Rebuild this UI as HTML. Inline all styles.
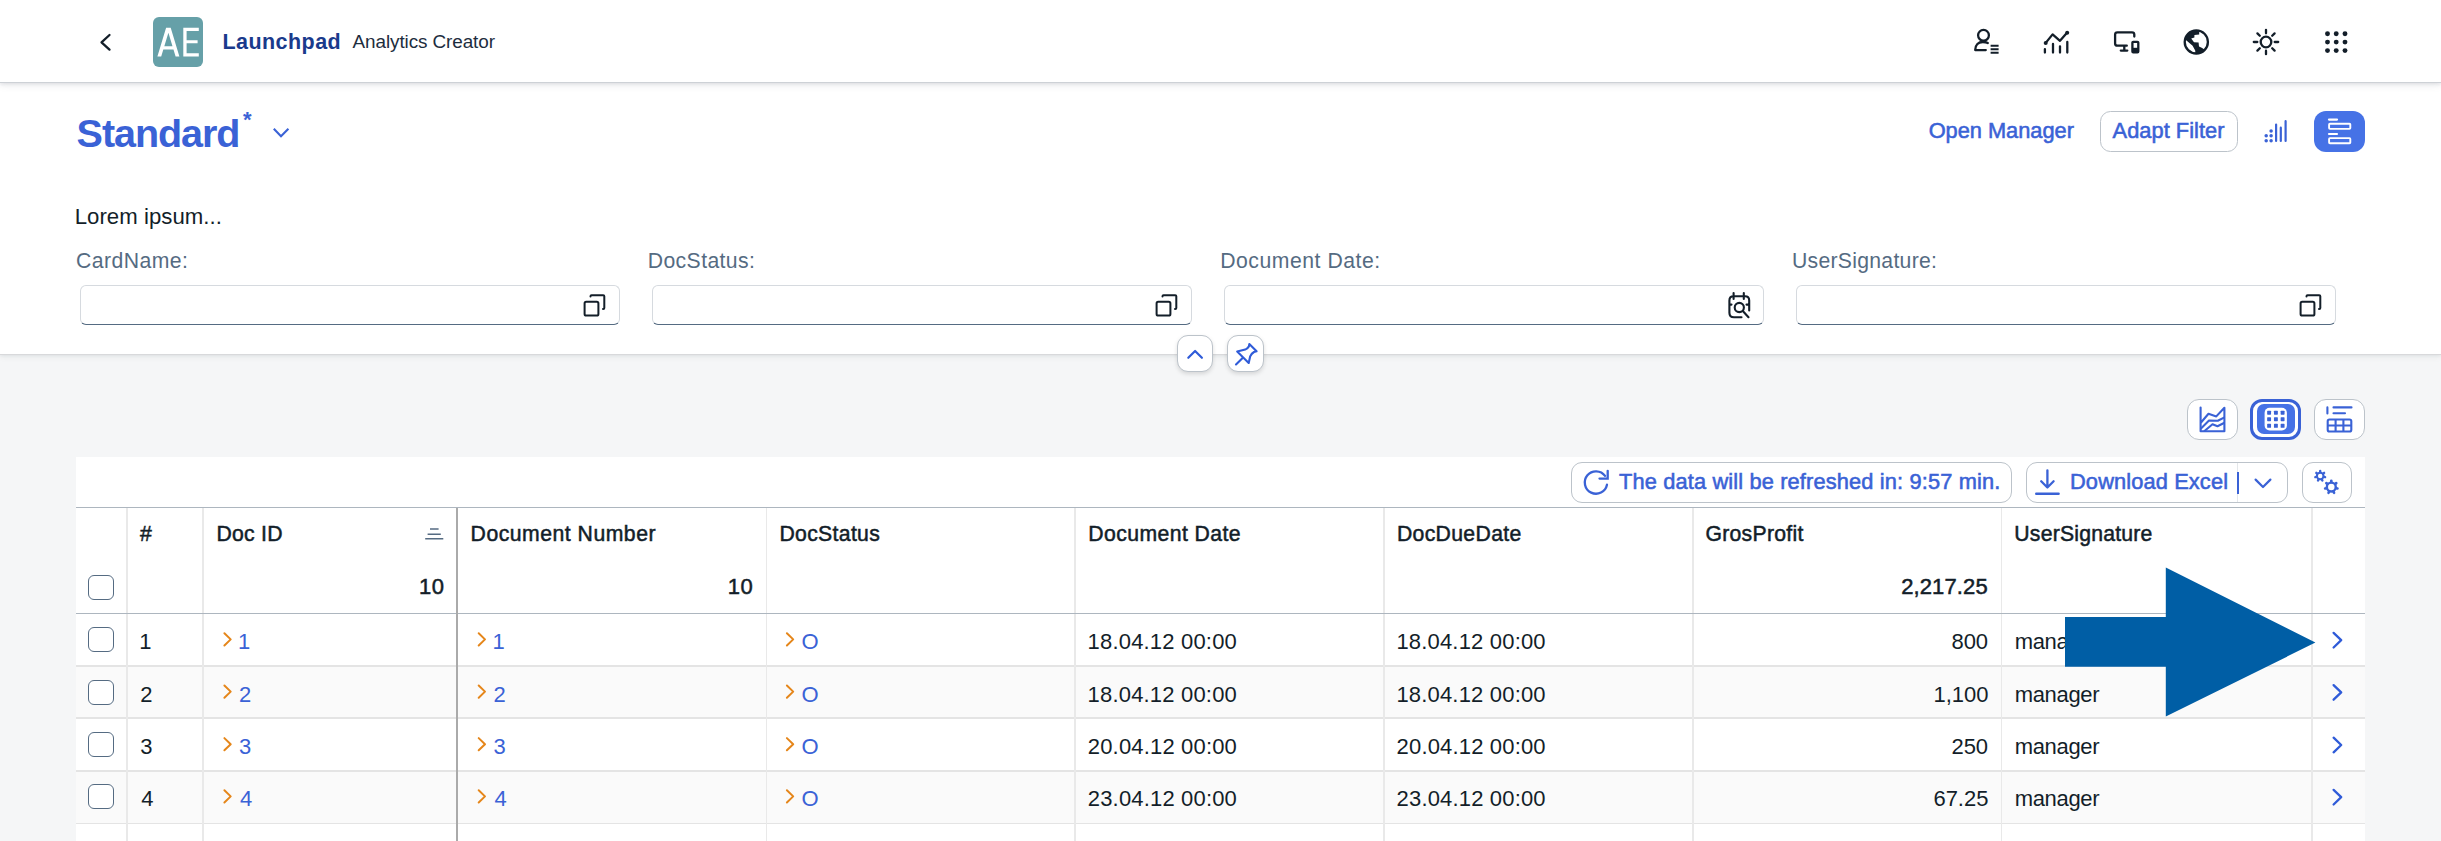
<!DOCTYPE html>
<html><head><meta charset="utf-8"><style>
*{box-sizing:border-box;margin:0;padding:0}
html,body{width:2441px;height:841px;overflow:hidden}
body{background:#f5f6f7;font-family:"Liberation Sans",sans-serif;color:#1d2d3e;position:relative}
.a{position:absolute}
.t{position:absolute;line-height:0;white-space:nowrap;z-index:8}
.b{font-weight:bold}
svg{position:absolute;overflow:visible;z-index:8;left:0;top:0}
#hdr{left:0;top:0;width:2441px;height:82px;background:#fff;box-shadow:0 1px 0 #cdd1d6,0 2px 4px rgba(30,40,60,.13),0 4px 8px rgba(30,40,60,.06);z-index:3}
#flt{left:0;top:82px;width:2441px;height:272px;background:#fff;box-shadow:0 1px 0 #d8d9db,0 2px 3px rgba(30,40,60,.07),0 4px 6px rgba(30,40,60,.04);z-index:2}
.inp{position:absolute;top:284.8px;height:40px;width:539.5px;background:#fff;border:1.5px solid #d6dadf;border-bottom:1.7px solid #556b82;border-radius:6px;z-index:4}
.btn{position:absolute;background:#fff;border:1.5px solid #bcc3ca;border-radius:11px;z-index:4}
#tbl{left:76px;top:457px;width:2289px;height:384px;background:#fff;z-index:1}
.cb{position:absolute;left:88px;width:25.6px;height:25px;border:1.6px solid #556b82;border-radius:6px;background:#fff;z-index:6}
</style></head><body>
<div id="hdr" class="a"></div>
<div id="flt" class="a"></div>
<div id="tbl" class="a"></div>
<div class="a" style="left:152.7px;top:16.7px;width:50.4px;height:50.3px;background:#66a0a8;border-radius:6px;z-index:5"></div>
<svg width="2441" height="841">
 <path d="M157.4 56.5 L166.1 27.7 L170.7 27.7 L179.4 56.5 L175.6 56.5 L168.4 32.8 L161.2 56.5 Z M162.3 46.3 H174.6 V49.4 H162.3 Z M183.3 27.7 H198.8 V30.9 H186.6 V40.2 H197.6 V43.2 H186.6 V53.3 H198.8 V56.5 H183.3 Z" fill="#fff"/>
 
 <path d="M109.5 35 L101.5 42.3 L109.5 49.6" fill="none" stroke="#131e29" stroke-width="2.3" stroke-linecap="round" stroke-linejoin="round"/>
 <g fill="none" stroke="#131e29" stroke-width="2.3" stroke-linecap="round" stroke-linejoin="round">
  <circle cx="1983.5" cy="35.3" r="5.4"/>
  <path d="M1985.8 50.1 H1975.2 C1975.2 45 1978.5 42 1982.8 42 C1985 42 1986.6 42.4 1987.8 43"/>
  <path d="M1990.6 45.8 H1998.6 M1990.6 49.3 H1998.6 M1990.6 52.8 H1998.6" stroke-width="2.1" stroke-linecap="butt"/>
  <path d="M2045.7 42.9 L2052.6 34.4 L2060 40.8 L2067 32.8"/>
  <path d="M2044.9 49.2 V52.6 M2053 44 V52.6 M2060 46.3 V52.6 M2067.3 42 V52.6"/>
  <path d="M2134.3 36.6 V34.6 Q2134.3 32.3 2132 32.3 H2117.4 Q2115.1 32.3 2115.1 34.6 V43.4 Q2115.1 45.7 2117.4 45.7 H2126.8 M2124.3 45.7 V50.6 M2120.8 50.6 H2127.3"/>
  <rect x="2132.4" y="41.8" width="5.9" height="10.6" rx="0.8"/>
  <circle cx="2196.3" cy="41.9" r="11.6"/>
  <circle cx="2266" cy="42" r="5.3"/>
  <path d="M2266 29.8 V33.3 M2266 50.7 V54.2 M2253.8 42 H2257.3 M2274.7 42 H2278.2 M2257.4 33.4 L2259.8 35.8 M2272.2 48.2 L2274.6 50.6 M2257.4 50.6 L2259.8 48.2 M2272.2 35.8 L2274.6 33.4"/>
 </g>
 <circle cx="2045.7" cy="42.9" r="2" fill="#131e29"/>
 <circle cx="2067.2" cy="32.7" r="2" fill="#131e29"/>
 <rect x="2132.4" y="47.8" width="5.9" height="4.6" fill="#131e29"/>
 <clipPath id="gc"><circle cx="2196.3" cy="41.9" r="11.6"/></clipPath>
 <path clip-path="url(#gc)" d="M2199.2 28 L2199.2 34.4 L2194.4 35 L2194.4 37.6 L2191.2 38.5 L2194 42.2 L2198.6 42.4 L2199 46.6 L2201.7 47.8 L2206 50.5 L2206 56 L2195.6 56 L2195.2 50.4 L2192.6 45.8 L2185.6 39.8 L2182 36 L2182 28 Z" fill="#131e29"/>
 <g fill="#131e29">
  <circle cx="2327.5" cy="33.7" r="2.45"/><circle cx="2336.2" cy="33.7" r="2.45"/><circle cx="2345" cy="33.7" r="2.45"/>
  <circle cx="2327.5" cy="42.1" r="2.45"/><circle cx="2336.2" cy="42.1" r="2.45"/><circle cx="2345" cy="42.1" r="2.45"/>
  <circle cx="2327.5" cy="50.6" r="2.45"/><circle cx="2336.2" cy="50.6" r="2.45"/><circle cx="2345" cy="50.6" r="2.45"/>
 </g>
</svg>
<div class="t b" style="left:242.9px;top:calc(127.2px - 0.3465em);font-size:22px;color:#3a62d6">*</div>
<svg width="2441" height="841">
 <path d="M273.8 128.8 L281 136.2 L288.4 128.8" fill="none" stroke="#3a62d6" stroke-width="2.1"/>
 <g fill="#3a62d6">
  <circle cx="2266.2" cy="135.7" r="1.75"/><circle cx="2266.2" cy="140.7" r="1.75"/>
  <circle cx="2271.1" cy="131.1" r="1.75"/><circle cx="2271.1" cy="135.7" r="1.75"/><circle cx="2271.1" cy="140.7" r="1.75"/>
 </g>
 <path d="M2276.1 124.5 V140.9 M2280.8 127.7 V140.9 M2285.6 121.2 V140.9" stroke="#3a62d6" stroke-width="2.2" stroke-linecap="round" fill="none"/>
</svg>
<div class="btn" style="left:2100px;top:111px;width:137.5px;height:41px;border-radius:10.5px"></div>
<div class="a" style="left:2314px;top:111px;width:51px;height:41px;border-radius:12px;background:#4672e6;z-index:5"></div>
<svg width="2441" height="841">
 <g fill="none" stroke="#fff" stroke-width="1.9">
  <path d="M2329 119.6 H2337" stroke-width="2.2" stroke-linecap="round"/>
  <rect x="2329.1" y="123.7" width="21.2" height="5.2" rx="0.8"/>
  <path d="M2329 134 H2337" stroke-width="2.2" stroke-linecap="round"/>
  <rect x="2329.1" y="138.1" width="21.2" height="5.2" rx="0.8"/>
 </g>
</svg>
<div class="inp" style="left:80px"></div>
<div class="inp" style="left:652px"></div>
<div class="inp" style="left:1224px"></div>
<div class="inp" style="left:1796px"></div>
<svg width="2441" height="841">
 <g fill="none" stroke="#131e29" stroke-width="2" stroke-linecap="round" stroke-linejoin="round">
  <path d="M590.5 296.6 V296.2 Q590.5 295.2 591.5 295.2 H603.2 Q604.3 295.2 604.3 296.3 V308 Q604.3 309 603.3 309 H603"/>
  <rect x="584.6" y="301.8" width="13.8" height="13.8" rx="1.6"/>
  <path d="M1162.5 296.6 V296.2 Q1162.5 295.2 1163.5 295.2 H1175.2 Q1176.3 295.2 1176.3 296.3 V308 Q1176.3 309 1175.3 309 H1175"/>
  <rect x="1156.6" y="301.8" width="13.8" height="13.8" rx="1.6"/>
  <path d="M2306.5 296.6 V296.2 Q2306.5 295.2 2307.5 295.2 H2319.2 Q2320.3 295.2 2320.3 296.3 V308 Q2320.3 309 2319.3 309 H2319"/>
  <rect x="2300.6" y="301.8" width="13.8" height="13.8" rx="1.6"/>
  <path d="M1741.5 317.3 H1734 Q1729.4 317.3 1729.4 312.7 V300.5 Q1729.4 296.3 1733.5 296.3 H1745 Q1749.2 296.3 1749.2 300.5 V310.5 M1733.6 293 V299 M1743.8 293 V299 M1730 304.6 H1731.5 M1746.5 304.6 H1748" stroke-width="2.1"/>
  <circle cx="1739.3" cy="307.5" r="4.6" stroke-width="2.1"/>
  <path d="M1742.8 311 L1748.5 317.2" stroke-width="2.1"/>
 </g>
</svg>
<div class="btn" style="left:1176.6px;top:335.4px;width:36.8px;height:36.8px;border-radius:11px;box-shadow:0 2px 4px rgba(0,0,0,.13);z-index:6"></div>
<div class="btn" style="left:1227.4px;top:335.4px;width:36.8px;height:36.8px;border-radius:11px;box-shadow:0 2px 4px rgba(0,0,0,.13);z-index:6"></div>
<svg width="2441" height="841">
  <path d="M1188.3 357.8 L1195.1 351 L1201.9 357.8" fill="none" stroke="#2f5bd8" stroke-width="2.2" stroke-linecap="round" stroke-linejoin="round"/>
  <g fill="none" stroke="#2f5bd8" stroke-width="2.1" stroke-linecap="round" stroke-linejoin="round">
    <path d="M1236 364.5 L1242.6 357.9"/>
    <path d="M1237.2 351.6 L1245.2 349.6 Q1247.6 348.6 1248.9 346.4 L1249.3 344.1 L1256.6 351.2 L1254 352 Q1251.3 353.6 1250.2 356.3 L1248.7 363 Z"/>
  </g>
</svg>
<div class="btn" style="left:2187px;top:398.5px;width:50.5px;height:41px;border-radius:12px"></div>
<div class="a" style="left:2250.3px;top:398.5px;width:50.7px;height:41px;border-radius:12px;border:3px solid #3a62d6;background:#fff;z-index:5"></div>
<div class="a" style="left:2256.6px;top:404px;width:38.4px;height:29.5px;border-radius:7px;background:#4672e6;z-index:6"></div>
<div class="btn" style="left:2314.4px;top:398.5px;width:50.5px;height:41px;border-radius:12px"></div>
<svg width="2441" height="841">
 <g fill="none" stroke="#3a62d6" stroke-width="2.1" stroke-linejoin="round" stroke-linecap="round">
  <path d="M2200.6 407.6 V431.2 H2224.4 V407.8 L2216.3 416.4 L2208.5 413.8 L2200.8 422.8"/>
  <path d="M2201 428.5 L2209 420.5 L2217.8 420.8 L2224 417.6"/>
  <path d="M2204.5 431 L2212.5 424.3 L2217.5 426.3 L2224 423"/>
  <path d="M2327.4 407.4 V413.5 M2333.5 407.4 H2351.5 M2333.5 413.3 H2345"/>
  <rect x="2327.7" y="419.5" width="23.6" height="12" rx="1.8"/>
  <path d="M2327.7 425.5 H2351.3 M2335.6 419.5 V431.5 M2343.4 419.5 V431.5" stroke-linecap="butt"/>
 </g>
 <rect x="2264.6" y="407.7" width="22.3" height="22.8" rx="5" fill="#fff"/>
 <g fill="#3a62d6"><rect x="2267.15" y="410.75" width="3.9" height="3.9" rx="0.6"/><rect x="2267.15" y="417.25" width="3.9" height="3.9" rx="0.6"/><rect x="2267.15" y="423.85" width="3.9" height="3.9" rx="0.6"/><rect x="2273.95" y="410.75" width="3.9" height="3.9" rx="0.6"/><rect x="2273.95" y="417.25" width="3.9" height="3.9" rx="0.6"/><rect x="2273.95" y="423.85" width="3.9" height="3.9" rx="0.6"/><rect x="2280.65" y="410.75" width="3.9" height="3.9" rx="0.6"/><rect x="2280.65" y="417.25" width="3.9" height="3.9" rx="0.6"/><rect x="2280.65" y="423.85" width="3.9" height="3.9" rx="0.6"/></g>
</svg>
<div class="a" style="left:76px;top:666.6px;width:2289px;height:52px;background:#fafafa;z-index:2"></div>
<div class="a" style="left:76px;top:771.9px;width:2289px;height:52px;background:#fafafa;z-index:2"></div>
<div class="btn" style="left:1571px;top:462px;width:441px;height:41px;border-radius:11px"></div>
<div class="btn" style="left:2025.7px;top:462px;width:262.3px;height:41px;border-radius:11px"></div>
<div class="a" style="left:2237px;top:463px;width:1px;height:39px;background:#e4e7ea;z-index:5"></div>
<div class="a" style="left:2237px;top:472px;width:2px;height:22px;background:#3a62d6;z-index:6"></div>
<div class="btn" style="left:2301.5px;top:462px;width:50px;height:41px;border-radius:11px"></div>
<div class="a" style="left:76px;top:506.5px;width:2289px;height:1.2px;background:#adb6bf;z-index:4"></div>
<div class="a" style="left:76px;top:612.6px;width:2289px;height:1.3px;background:#adb6bf;z-index:4"></div>
<div class="a" style="left:76px;top:665.2px;width:2289px;height:1.6px;background:#e4e4e4;z-index:3"></div>
<div class="a" style="left:76px;top:717.4px;width:2289px;height:1.6px;background:#e4e4e4;z-index:3"></div>
<div class="a" style="left:76px;top:770.4px;width:2289px;height:1.6px;background:#e4e4e4;z-index:3"></div>
<div class="a" style="left:76px;top:822.7px;width:2289px;height:1.6px;background:#e4e4e4;z-index:3"></div>
<div class="a" style="left:126.1px;top:508px;width:1.8px;height:333px;background:#e9e9e9;z-index:3"></div>
<div class="a" style="left:202.1px;top:508px;width:1.8px;height:333px;background:#e9e9e9;z-index:3"></div>
<div class="a" style="left:765.7px;top:508px;width:1.8px;height:333px;background:#e9e9e9;z-index:3"></div>
<div class="a" style="left:1074.1px;top:508px;width:1.8px;height:333px;background:#e9e9e9;z-index:3"></div>
<div class="a" style="left:1382.9px;top:508px;width:1.8px;height:333px;background:#e9e9e9;z-index:3"></div>
<div class="a" style="left:1691.8px;top:508px;width:1.8px;height:333px;background:#e9e9e9;z-index:3"></div>
<div class="a" style="left:2000.5px;top:508px;width:1.8px;height:333px;background:#e9e9e9;z-index:3"></div>
<div class="a" style="left:2311.0px;top:508px;width:1.8px;height:333px;background:#e9e9e9;z-index:3"></div>
<div class="a" style="left:456.1px;top:508px;width:2.2px;height:333px;background:#aaaaaa;z-index:4"></div>
<div class="cb" style="top:574.9px"></div>
<div class="cb" style="top:627.3px"></div>
<div class="cb" style="top:679.6px"></div>
<div class="cb" style="top:732px"></div>
<div class="cb" style="top:784.3px"></div>
<svg width="2441" height="841"><path d="M430 529 H438.6 M427.6 534.2 H440.8 M425.2 538.8 H443.3" stroke="#556b82" stroke-width="1.6" fill="none"/><g fill="none" stroke-width="2" stroke-linecap="round" stroke-linejoin="round"><path d="M224.4 633.3 L230.70000000000002 639.4 L224.4 645.5" stroke="#e5861a"/><path d="M478.7 633.3 L485.0 639.4 L478.7 645.5" stroke="#e5861a"/><path d="M786.9 633.3 L793.1999999999999 639.4 L786.9 645.5" stroke="#e5861a"/><path d="M2333.6 632.9 L2341.2 640.2 L2333.6 647.5" stroke="#2f5bd8" stroke-width="2.3"/><path d="M224.4 685.5 L230.70000000000002 691.6 L224.4 697.7" stroke="#e5861a"/><path d="M478.7 685.5 L485.0 691.6 L478.7 697.7" stroke="#e5861a"/><path d="M786.9 685.5 L793.1999999999999 691.6 L786.9 697.7" stroke="#e5861a"/><path d="M2333.6 685.1 L2341.2 692.4 L2333.6 699.7" stroke="#2f5bd8" stroke-width="2.3"/><path d="M224.4 738.0999999999999 L230.70000000000002 744.1999999999999 L224.4 750.3" stroke="#e5861a"/><path d="M478.7 738.0999999999999 L485.0 744.1999999999999 L478.7 750.3" stroke="#e5861a"/><path d="M786.9 738.0999999999999 L793.1999999999999 744.1999999999999 L786.9 750.3" stroke="#e5861a"/><path d="M2333.6 737.7 L2341.2 745.0 L2333.6 752.3" stroke="#2f5bd8" stroke-width="2.3"/><path d="M224.4 790.3 L230.70000000000002 796.4 L224.4 802.5" stroke="#e5861a"/><path d="M478.7 790.3 L485.0 796.4 L478.7 802.5" stroke="#e5861a"/><path d="M786.9 790.3 L793.1999999999999 796.4 L786.9 802.5" stroke="#e5861a"/><path d="M2333.6 789.9 L2341.2 797.2 L2333.6 804.5" stroke="#2f5bd8" stroke-width="2.3"/></g></svg>
<svg width="2441" height="841">
 <g fill="none" stroke="#3a62d6" stroke-width="2.4" stroke-linecap="round" stroke-linejoin="round">
  <path d="M1606.98 484.73 A11.2 11.2 0 1 1 1605.06 475.92" stroke-width="2.3"/>
  <path d="M1607.7 470.8 V478.6 H1599.5" stroke-width="2.3" stroke-linejoin="miter"/>
  <path d="M2047.4 470.3 V487.4 M2041.2 481.3 L2047.4 487.5 L2053.6 481.3" stroke-width="2.3"/>
  <path d="M2036.2 493.8 H2058.6" stroke-width="2.4"/>
  <path d="M2255.6 479.6 L2263 487 L2270.4 479.6" stroke-width="2.2"/>
 </g>
 <circle cx="2320.2" cy="476.0" r="3.3" fill="none" stroke="#3a62d6" stroke-width="2.1"/><path d="M2320.20 472.00 L2320.20 471.00 M2317.07 473.51 L2316.29 472.88 M2316.30 476.89 L2315.33 477.11 M2318.46 479.60 L2318.03 480.50 M2321.94 479.60 L2322.37 480.50 M2324.10 476.89 L2325.07 477.11 M2323.33 473.51 L2324.11 472.88 " stroke="#3a62d6" stroke-width="2.4" stroke-linecap="round"/>
 <circle cx="2331.3" cy="487.1" r="4.45" fill="none" stroke="#3a62d6" stroke-width="2.4"/><path d="M2331.30 482.10 L2331.30 480.80 M2327.39 483.98 L2326.37 483.17 M2326.43 488.21 L2325.16 488.50 M2329.13 491.60 L2328.57 492.78 M2333.47 491.60 L2334.03 492.78 M2336.17 488.21 L2337.44 488.50 M2335.21 483.98 L2336.23 483.17 " stroke="#3a62d6" stroke-width="2.7" stroke-linecap="round"/>
</svg>
<svg style="z-index:30" width="2441" height="841"><path d="M2065 617 H2165.8 V567.5 L2315.4 642.6 L2165.8 716.5 V666.8 H2065 Z" fill="#005ea5"/></svg>
<div class="t b" style="left:222.50px;top:calc(49.5px - 0.3465em);font-size:21.5px;color:#1a3a8c;letter-spacing:0.438px">Launchpad</div>
<div class="t" style="left:352.60px;top:calc(48.6px - 0.3465em);font-size:18.9px;color:#1d2d3e;letter-spacing:-0.094px">Analytics Creator</div>
<div class="t b" style="left:76.60px;top:calc(146.6px - 0.3465em);font-size:39.5px;color:#3a62d6;letter-spacing:-1.057px">Standard</div>
<div class="t" style="left:1928.70px;top:calc(138.5px - 0.3465em);font-size:21.8px;color:#3a62d6;-webkit-text-stroke:0.55px #3a62d6;letter-spacing:-0.018px">Open Manager</div>
<div class="t" style="left:2112.60px;top:calc(138.6px - 0.3465em);font-size:21.8px;color:#3a62d6;-webkit-text-stroke:0.55px #3a62d6;letter-spacing:0.036px">Adapt Filter</div>
<div class="t" style="left:74.70px;top:calc(224.7px - 0.3465em);font-size:22.2px;color:#131e29;letter-spacing:0.038px">Lorem ipsum...</div>
<div class="t" style="left:76.00px;top:calc(268.6px - 0.3465em);font-size:21.2px;color:#556b82;letter-spacing:0.450px">CardName:</div>
<div class="t" style="left:647.75px;top:calc(268.6px - 0.3465em);font-size:21.2px;color:#556b82;letter-spacing:0.394px">DocStatus:</div>
<div class="t" style="left:1220.20px;top:calc(268.6px - 0.3465em);font-size:21.2px;color:#556b82;letter-spacing:0.531px">Document Date:</div>
<div class="t" style="left:1792.00px;top:calc(268.6px - 0.3465em);font-size:21.2px;color:#556b82;letter-spacing:0.277px">UserSignature:</div>
<div class="t" style="left:1619.00px;top:calc(489.3px - 0.3465em);font-size:21.8px;color:#3a62d6;-webkit-text-stroke:0.55px #3a62d6;letter-spacing:0.146px">The data will be refreshed in: 9:57 min.</div>
<div class="t" style="left:2070.00px;top:calc(489.3px - 0.3465em);font-size:21.8px;color:#3a62d6;-webkit-text-stroke:0.55px #3a62d6;letter-spacing:0.131px">Download Excel</div>
<div class="t" style="left:140.10px;top:calc(541.5px - 0.3465em);font-size:21.2px;color:#131e29;-webkit-text-stroke:0.5px #131e29">#</div>
<div class="t" style="left:216.40px;top:calc(541.5px - 0.3465em);font-size:21.2px;color:#131e29;-webkit-text-stroke:0.5px #131e29;letter-spacing:0.280px">Doc ID</div>
<div class="t" style="left:470.60px;top:calc(541.5px - 0.3465em);font-size:21.2px;color:#131e29;-webkit-text-stroke:0.5px #131e29;letter-spacing:0.507px">Document Number</div>
<div class="t" style="left:779.40px;top:calc(541.5px - 0.3465em);font-size:21.2px;color:#131e29;-webkit-text-stroke:0.5px #131e29;letter-spacing:0.338px">DocStatus</div>
<div class="t" style="left:1088.30px;top:calc(541.5px - 0.3465em);font-size:21.2px;color:#131e29;-webkit-text-stroke:0.5px #131e29;letter-spacing:0.417px">Document Date</div>
<div class="t" style="left:1396.90px;top:calc(541.5px - 0.3465em);font-size:21.2px;color:#131e29;-webkit-text-stroke:0.5px #131e29;letter-spacing:0.344px">DocDueDate</div>
<div class="t" style="left:1705.40px;top:calc(541.5px - 0.3465em);font-size:21.2px;color:#131e29;-webkit-text-stroke:0.5px #131e29;letter-spacing:0.289px">GrosProfit</div>
<div class="t" style="left:2014.30px;top:calc(541.5px - 0.3465em);font-size:21.2px;color:#131e29;-webkit-text-stroke:0.5px #131e29;letter-spacing:0.217px">UserSignature</div>
<div class="t" style="left:419.00px;top:calc(594.3px - 0.3465em);font-size:22px;color:#131e29;-webkit-text-stroke:0.5px #131e29;letter-spacing:0.500px">10</div>
<div class="t" style="left:727.80px;top:calc(594.3px - 0.3465em);font-size:22px;color:#131e29;-webkit-text-stroke:0.5px #131e29;letter-spacing:0.500px">10</div>
<div class="t" style="left:1901.20px;top:calc(594.3px - 0.3465em);font-size:22px;color:#131e29;-webkit-text-stroke:0.5px #131e29;letter-spacing:0.114px">2,217.25</div>
<div class="t" style="left:139.20px;top:calc(650.0px - 0.3465em);font-size:22px;color:#131e29">1</div>
<div class="t" style="left:238.00px;top:calc(650.0px - 0.3465em);font-size:22px;color:#3a62d6">1</div>
<div class="t" style="left:492.60px;top:calc(650.0px - 0.3465em);font-size:22px;color:#3a62d6">1</div>
<div class="t" style="left:801.50px;top:calc(650.0px - 0.3465em);font-size:22px;color:#3a62d6">O</div>
<div class="t" style="left:1087.60px;top:calc(650.0px - 0.3465em);font-size:22px;color:#131e29;letter-spacing:0.185px">18.04.12 00:00</div>
<div class="t" style="left:1396.40px;top:calc(650.0px - 0.3465em);font-size:22px;color:#131e29;letter-spacing:0.185px">18.04.12 00:00</div>
<div class="t" style="left:1951.40px;top:calc(650.0px - 0.3465em);font-size:22px;color:#131e29">800</div>
<div class="t" style="left:2014.70px;top:calc(650.0px - 0.3465em);font-size:22px;color:#131e29;letter-spacing:-0.333px">manager</div>
<div class="t" style="left:140.20px;top:calc(702.2px - 0.3465em);font-size:22px;color:#131e29">2</div>
<div class="t" style="left:239.00px;top:calc(702.2px - 0.3465em);font-size:22px;color:#3a62d6">2</div>
<div class="t" style="left:493.60px;top:calc(702.2px - 0.3465em);font-size:22px;color:#3a62d6">2</div>
<div class="t" style="left:801.50px;top:calc(702.2px - 0.3465em);font-size:22px;color:#3a62d6">O</div>
<div class="t" style="left:1087.60px;top:calc(702.2px - 0.3465em);font-size:22px;color:#131e29;letter-spacing:0.185px">18.04.12 00:00</div>
<div class="t" style="left:1396.40px;top:calc(702.2px - 0.3465em);font-size:22px;color:#131e29;letter-spacing:0.185px">18.04.12 00:00</div>
<div class="t" style="left:1933.40px;top:calc(702.2px - 0.3465em);font-size:22px;color:#131e29">1,100</div>
<div class="t" style="left:2014.70px;top:calc(702.2px - 0.3465em);font-size:22px;color:#131e29;letter-spacing:-0.333px">manager</div>
<div class="t" style="left:140.20px;top:calc(754.8px - 0.3465em);font-size:22px;color:#131e29">3</div>
<div class="t" style="left:239.00px;top:calc(754.8px - 0.3465em);font-size:22px;color:#3a62d6">3</div>
<div class="t" style="left:493.60px;top:calc(754.8px - 0.3465em);font-size:22px;color:#3a62d6">3</div>
<div class="t" style="left:801.50px;top:calc(754.8px - 0.3465em);font-size:22px;color:#3a62d6">O</div>
<div class="t" style="left:1087.80px;top:calc(754.8px - 0.3465em);font-size:22px;color:#131e29;letter-spacing:0.169px">20.04.12 00:00</div>
<div class="t" style="left:1396.60px;top:calc(754.8px - 0.3465em);font-size:22px;color:#131e29;letter-spacing:0.169px">20.04.12 00:00</div>
<div class="t" style="left:1951.40px;top:calc(754.8px - 0.3465em);font-size:22px;color:#131e29">250</div>
<div class="t" style="left:2014.70px;top:calc(754.8px - 0.3465em);font-size:22px;color:#131e29;letter-spacing:-0.333px">manager</div>
<div class="t" style="left:141.20px;top:calc(807.0px - 0.3465em);font-size:22px;color:#131e29">4</div>
<div class="t" style="left:240.00px;top:calc(807.0px - 0.3465em);font-size:22px;color:#3a62d6">4</div>
<div class="t" style="left:494.60px;top:calc(807.0px - 0.3465em);font-size:22px;color:#3a62d6">4</div>
<div class="t" style="left:801.50px;top:calc(807.0px - 0.3465em);font-size:22px;color:#3a62d6">O</div>
<div class="t" style="left:1087.80px;top:calc(807.0px - 0.3465em);font-size:22px;color:#131e29;letter-spacing:0.169px">23.04.12 00:00</div>
<div class="t" style="left:1396.60px;top:calc(807.0px - 0.3465em);font-size:22px;color:#131e29;letter-spacing:0.169px">23.04.12 00:00</div>
<div class="t" style="left:1933.40px;top:calc(807.0px - 0.3465em);font-size:22px;color:#131e29">67.25</div>
<div class="t" style="left:2014.70px;top:calc(807.0px - 0.3465em);font-size:22px;color:#131e29;letter-spacing:-0.333px">manager</div>
</body></html>
